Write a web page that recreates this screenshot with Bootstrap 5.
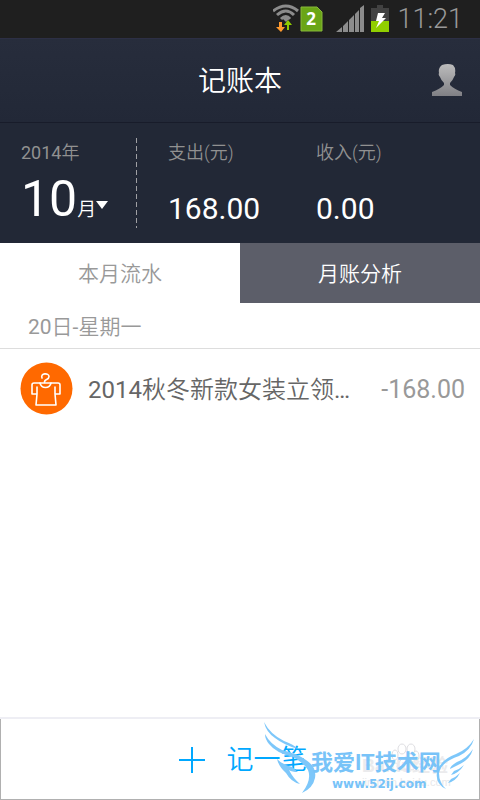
<!DOCTYPE html>
<html lang="zh-CN">
<head>
<meta charset="utf-8">
<meta name="viewport" content="width=device-width, initial-scale=1">
<title>记账本</title>
<link href="https://cdn.jsdelivr.net/npm/bootstrap@5.3.0/dist/css/bootstrap.min.css" rel="stylesheet">
<style>
body { font-family: Roboto, "Noto Sans CJK SC", sans-serif; background: #fff; color: #666; }
button { font-family: inherit; }
svg { display: block; }
.status { height: 38px; background: #1f1f1f; color: #999; padding-right: 17px; }
.clock { font-size: 27px; line-height: 36px; font-weight: 300; }
.topbar { height: 85px; background: linear-gradient(#272d3c, #222837); border-top: 1px solid #2d2f45; border-bottom: 1px solid #181c2a; color: #fff; grid-template-columns: 1fr auto 1fr; }
.topbar h1 { font-size: 28px; line-height: 36px; font-weight: 350; grid-column: 2; padding-top: 3px; }
.profile { justify-self: end; margin-right: 18px; margin-bottom: 2px; }
.summary { height: 120px; background: #222836; color: #fff; }
.month { width: 136px; padding: 18px 0 0 21px; }
.caption { font-size: 18px; line-height: 24px; color: #919191; font-weight: 350; }
.month-button { color: #fff; line-height: 60px; margin-top: 4px; }
.month-number { font-size: 50px; }
.month-unit { font-size: 19px; font-weight: 350; }
.divider { width: 1px; margin: 15px 0; background: repeating-linear-gradient(#a0a0a4 0 5px, transparent 5px 8px); }
.total { padding: 18px 0 0 31px; }
.amount { font-size: 30px; line-height: 36px; margin-top: 26px; }
.tab { height: 60px; font-size: 21px; line-height: 30px; color: #fff; background: #5c5e69; font-weight: 350; padding-top: 8px; }
.tab[aria-selected="true"] { background: #fff; color: #999; }
.day { height: 46px; padding: 2px 0 0 28px; font-size: 21px; line-height: 44px; color: #999; border-bottom: 1px solid #ddd; font-weight: 350; }
.digits { font-weight: 400; }
.entry { height: 78px; padding: 0 15px 0 20px; }
.entry-name { font-size: 24px; line-height: 36px; margin-left: 15px; padding-top: 3px; font-weight: 350; }
.entry-sum { font-size: 25px; line-height: 36px; padding-top: 4px; color: #999; }
.add-wrap { border-top: 2px solid #eeeef4; }
.add { height: 81px; background: #fff; border: 1px solid #b0b0b0; border-top: 0; color: #00a8ff; font-size: 27px; line-height: 36px; gap: 22px; font-weight: 350; padding: 8px 12px 6px 18px; }
.stamp { right: 4px; bottom: 4px; width: 212px; height: 74px; pointer-events: none; color: #78c3f8; }
.stamp-name { left: 47px; top: 25px; font-size: 22px; line-height: 32px; font-weight: 700; white-space: nowrap; }
.stamp-url { left: 68px; top: 54px; font: 700 12px/16px "DejaVu Sans", sans-serif; }
</style>
<script src="https://cdn.jsdelivr.net/npm/bootstrap@5.3.0/dist/js/bootstrap.bundle.min.js"></script>
</head>
<body class="d-flex flex-column min-vh-100">
<div class="status d-flex justify-content-end align-items-center">
  <svg width="120" height="38" aria-hidden="true">
    <g fill="none" stroke="#8c8c8c" stroke-width="3">
      <path d="M0 11Q13 1 25 11M4 15Q13 7 21 15M8 19Q13 14 17 19"/>
    </g>
    <path d="M9 18h8l-4 4z" fill="#8c8c8c"/>
    <path d="M6 22h3v5h3l-4 5-5-5h3z" fill="#ff9a2e"/>
    <path d="M14 30v-5h-3l4-5 4 5h-3v5z" fill="#8fcc00"/>
    <path d="M28 7h16l5 5v19H28z" fill="#6aa516" stroke="#88b83b"/>
    <text x="38" y="25" fill="#fff" font-size="17" font-weight="700" text-anchor="middle" font-family="Open Sans, sans-serif">2</text>
    <path d="M63 32l6-5v5zM70 26l5-5v11h-5zM76 20l5-5v17h-5zM82 14l4-4v22h-4zM87 8l4-3v27h-4z" fill="#8c8c8c"/>
    <path d="M98 8h6V5h6v3h6v13H98z" fill="#424242"/>
    <path d="M98 21h18v11H98z" fill="#91cf00"/>
    <path d="M105 13h7l-3 5h4l-10 10 3-7h-3z" fill="#fff"/>
  </svg>
  <span class="clock ms-1">11:21</span>
</div>
<header class="topbar d-grid align-items-center">
  <h1 class="mb-0">记账本</h1>
  <button class="profile btn p-0 border-0" type="button" aria-label="个人中心">
    <svg width="30" height="32" viewBox="0 0 30 32"><defs><linearGradient id="person" x2="0" y2="1"><stop stop-color="#bcbcbc"/><stop offset="1" stop-color="#808085"/></linearGradient></defs><path d="M10 1Q16-1 21 1Q24 4 23 9Q24 11 22 13Q21 16 18 19V21Q22 25 30 28V32H0V28Q8 25 12 21V19Q9 16 8 13Q6 11 7 9Q6 4 10 1Z" fill="url(#person)"/></svg>
  </button>
</header>
<section class="summary d-flex">
  <div class="month">
    <div class="caption"><span class="digits">2014</span>年</div>
    <button class="month-button btn p-0 border-0 d-flex align-items-baseline" type="button"><span class="month-number">10</span><span class="month-unit">月</span><svg class="align-self-center" width="12" height="8" aria-hidden="true"><path d="M0 0h12l-6 8z" fill="#fff"/></svg></button>
  </div>
  <div class="divider"></div>
  <div class="row g-0 flex-grow-1">
    <div class="col total"><div class="caption">支出(元)</div><div class="amount">168.00</div></div>
    <div class="col total pe-4 ps-2"><div class="caption">收入(元)</div><div class="amount">0.00</div></div>
  </div>
</section>
<div class="d-flex" role="tablist">
  <button class="tab btn rounded-0 border-0 w-50" type="button" role="tab" aria-selected="true">本月流水</button>
  <button class="tab btn rounded-0 border-0 w-50" type="button" role="tab" aria-selected="false">月账分析</button>
</div>
<main class="flex-grow-1">
  <h2 class="day m-0"><span class="digits">20</span>日<span class="digits">-</span>星期一</h2>
  <div class="entry d-flex align-items-center">
    <svg class="flex-shrink-0" width="53" height="53" viewBox="0 0 53 53" aria-hidden="true"><circle cx="26.500" cy="26.500" r="26" fill="#ff6900"/><g fill="none" stroke="#fff" stroke-width="1.600" stroke-linejoin="round" stroke-linecap="round"><path d="M20 21H14Q12 21 12 23V32H17L16 43H36L35 32H40V23Q40 21 38 21H31Q30 25.500 25.500 25.500Q21 25.500 20 21ZM17 25V32M35 25V32"/><path d="M22 16C20 11 29 10.500 29 14.500C29 18.500 24 16.500 24.500 20.500"/><path d="M20 21H31"/></g></svg>
    <span class="entry-name text-nowrap flex-grow-1"><span class="digits">2014</span>秋冬新款女装立领<span class="digits">…</span></span>
    <span class="entry-sum">-168.00</span>
  </div>
</main>
<footer class="add-wrap position-relative">
  <button class="add btn rounded-0 w-100 d-flex align-items-center justify-content-center" type="button">
    <svg width="26" height="26" aria-hidden="true"><path d="M0 13h26M13 0v26" stroke="#00a8ff" stroke-width="2"/></svg>
    <span>记一笔</span>
  </button>
  <div class="stamp position-absolute" aria-hidden="true">
    <svg width="212" height="74" viewBox="0 0 212 74">
      <g fill="none" stroke="#dedee2"><ellipse cx="131" cy="33" rx="3" ry="5"/><ellipse cx="138" cy="27" rx="4" ry="5"/><ellipse cx="147" cy="27" rx="4" ry="5"/><ellipse cx="152" cy="34" rx="3" ry="5"/><path d="M133 44Q142 26 151 44Q151 50 142 47Q133 50 133 44Z"/></g>
      <text x="98" y="50" font-family="Liberation Sans, Noto Sans CJK SC, sans-serif" font-size="18" font-weight="700" fill="#ebebed">Baidu经验</text>
      <text x="98" y="64" font-family="Liberation Sans, sans-serif" font-size="11" fill="#e8e8ea">jingyan.baidu.com</text>
      <g fill="#7dc7fa"><path d="M0 0Q6 12 20 19Q29 22 34 27Q20 23 11 16Q2 10 0 0Z"/><path d="M1 12Q6 22 18 28Q34 32 42 38Q53 45 51 56Q49 66 38 71Q48 58 44 48Q40 41 29 35Q12 31 5 22Q1 17 1 12Z"/><path d="M13 37Q19 43 28 45L34 50Q28 50 25 48Q29 56 36 62Q27 60 22 51Q15 45 13 37Z"/><path d="M210 17Q207 28 195 34Q177 40 175 51Q175 61 182 67Q171 62 173 50Q176 38 192 32Q204 27 210 17Z"/><path d="M209 27Q206 38 194 43L186 47Q186 44 193 40Q203 36 209 27ZM200 43Q195 51 187 53L190 49Q196 47 200 43ZM196 51Q192 59 184 61L187 57Q192 55 196 51Z"/></g>
    </svg>
    <span class="stamp-name position-absolute">我爱IT技术网</span>
    <span class="stamp-url position-absolute">www.52ij.com</span>
  </div>
</footer>
</body>
</html>
